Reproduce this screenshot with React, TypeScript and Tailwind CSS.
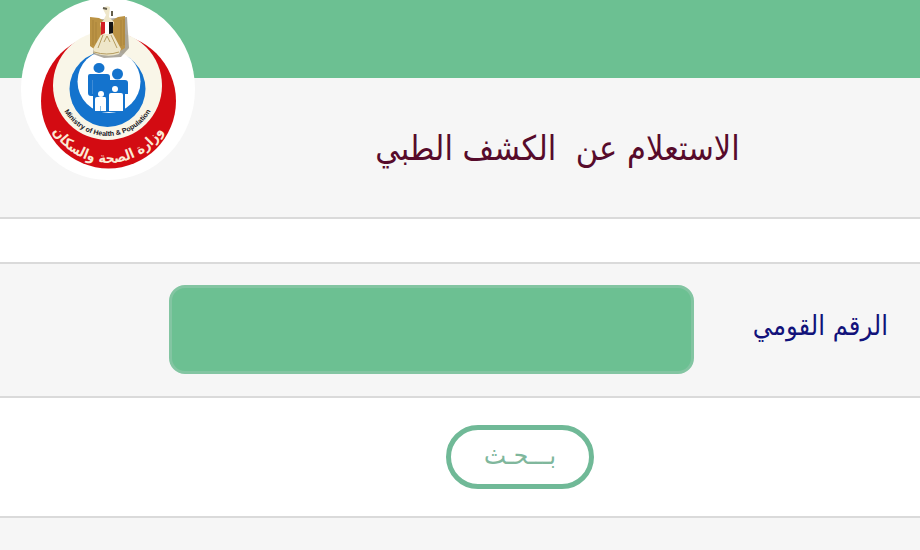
function MinistryLogo() {
  return (
    <svg viewBox="20 0 176 180" className="w-44" role="img" aria-label="Ministry of Health & Population">
      <defs>
        <path id="arc-en" d="M 57.5 86 A 50 50 0 0 0 157.5 86" />
        <path id="arc-ar" d="M 44 99 A 64 64 0 0 0 172 99" />
      </defs>
      <ellipse cx="108" cy="89" rx="87" ry="91" fill="#fff" />
      <circle cx="108.500" cy="101" r="67.500" fill="#d30b12" />
      <circle cx="107.500" cy="85.500" r="54.500" fill="#f9f6e8" />
      <circle cx="107.500" cy="89" r="38" fill="#1473cd" />
      <circle cx="109" cy="81.500" r="31.500" fill="#fff" />

      <g fill="#1473cd">
        <ellipse cx="99" cy="68" rx="5.500" ry="5" />
        <path d="M90 74 H107 Q110 74 110 77 V112 H93 V96 H91 Q88 96 88 93 V76 Q88 74 90 74 Z" />
        <circle cx="117.500" cy="74" r="5.500" />
        <path d="M110 80 H125 Q128 80 128 83 V94 H125 V112 H109 V80 Z" />
      </g>
      <path d="M92.500 80 V94" stroke="#3f8cd6" strokeWidth="1" />
      <g fill="#fff">
        <circle cx="101" cy="94" r="3" />
        <path d="M97 97 H105 Q106 97 106 99 V111 H95 V99 Q95 97 97 97 Z" />
        <circle cx="115" cy="89" r="3" />
        <path d="M111 93 H121 Q123 93 123 95 V111 H109 V95 Q109 93 111 93 Z" />
      </g>
      <path d="M100.500 111 V106" stroke="#8fbce6" strokeWidth="1" />

      <path d="M93 20 L127 17 L129 48 L121 57 L104 58 L93 54 Z" fill="#76705f" opacity="0.600" />
      <path d="M90 17 L99 18 Q103 20 105 22 H111 Q114 19 118 17 L125 16 V48 L120 51 H97 L90 46 Z" fill="#bb9344" />
      <path d="M93 20 V45 M96 22 V43 M121 20 V46 M124 19 V45" stroke="#a9833a" strokeWidth="1" />
      <path d="M103 21 L106 15 L103 9 Q105 5 110 7 L109 17 L114 22 L112 32 L121 49 L119 54 Q108 58 94 53 L93 49 L102 33 L100 23 Z" fill="#eee6c9" />
      <path d="M101 22 H105 V33 L101 35 Z" fill="#d31d24" />
      <path d="M105 22 H109 V34 H105 Z" fill="#fff" />
      <path d="M109 22 H113 V33 L109 34 Z" fill="#161616" />
      <path d="M103 35 L98 48 M111 35 L117 48 M104 42 L107 36 L110 42 M94 52 Q107 56 119 52" fill="none" stroke="#b59c5f" strokeWidth="1" />
      <path d="M103 8 L107 9 M112 11 V16" stroke="#655f4c" strokeWidth="2" />

      <text fontFamily="Liberation Sans, sans-serif" fontSize="7" fontWeight="700" fill="#15151c" textAnchor="middle">
        <textPath href="#arc-en" startOffset="50%">Ministry of Health &amp; Population</textPath>
      </text>
      <text fontFamily="DejaVu Sans Condensed, DejaVu Sans, sans-serif" fontSize="14" fontWeight="700" fill="#fbe9d5" textAnchor="middle">
        <textPath href="#arc-ar" startOffset="50%">وزارة الصحة والسكان</textPath>
      </text>
    </svg>
  );
}

export default function App() {
  return (
    <div dir="rtl" className="min-h-screen bg-[#f6f6f6] font-['DejaVu_Sans_Condensed','DejaVu_Sans',sans-serif]">
      <header className="relative h-[78px] bg-[#6cc092]">
        <div className="absolute left-5 top-0">
          <MinistryLogo />
        </div>
      </header>

      <main>
        <section className="flex h-[141px] items-center justify-center border-b-2 border-[#dadada] pl-[195px]">
          <h1 className="text-[34px] leading-[48px] text-[#570b2b]">الاستعلام عن &nbsp;الكشف الطبي</h1>
        </section>

        <form onSubmit={(e) => e.preventDefault()}>
          <div className="h-[43px] bg-white" />
          <div className="flex items-center border-y-2 border-[#dadada] pb-[22px] pl-[169px] pr-8 pt-[21px]">
            <label htmlFor="national-id" className="w-[194px] shrink-0 pb-2 text-[27px] leading-10 text-[#12127a]">
              الرقم القومي
            </label>
            <input
              id="national-id"
              type="text"
              inputMode="numeric"
              className="h-[89px] min-w-0 flex-1 rounded-2xl border-[3px] border-[#83c5a2] bg-[#6cc092] px-6 text-3xl text-white outline-none"
            />
          </div>
          <div className="flex justify-center border-b-2 border-[#dadada] bg-white py-[27px] pl-[120px]">
            <button
              type="submit"
              className="h-16 w-37 rounded-full border-[5px] border-[#70b997] bg-white pb-1 text-[26px] leading-8 text-[#80b79c]"
            >
              بـــحـث
            </button>
          </div>
        </form>
      </main>
    </div>
  );
}
